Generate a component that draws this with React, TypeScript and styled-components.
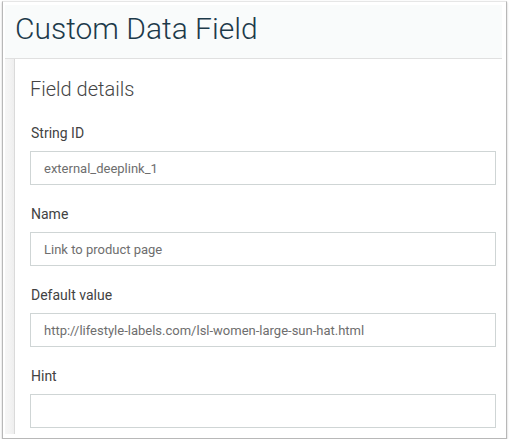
import styled, { createGlobalStyle } from 'styled-components'

const GlobalStyle = createGlobalStyle`
  html, body {
    margin: 0;
    padding: 0;
    background: #ffffff;
    font-family: Roboto, "Liberation Sans", Arial, sans-serif;
  }
`

const Frame = styled.div`
  margin: 1px 0 0 2px;
  width: 505px;
  height: 438px;
  box-sizing: border-box;
  border: 1px solid #b8b8b8;
  border-top-color: #e6e6e6;
  box-shadow: 0 1px 2px rgba(0, 0, 0, 0.22);
  padding: 3px 4px 4px 2px;
  display: flex;
  flex-direction: column;
  overflow: hidden;
`

const Header = styled.div`
  height: 54px;
  flex-shrink: 0;
  box-sizing: border-box;
  background: #f9fbfb;
  border-bottom: 1px solid #e0e0e0;
  padding: 5px 0 0 10px;
`

const Title = styled.h1`
  margin: 0;
  font-weight: 300;
  font-size: 30px;
  line-height: 38px;
  color: #1d3a4a;
`

const Body = styled.div`
  flex: 1;
  display: flex;
  min-height: 0;
  background: linear-gradient(to right, #f6f6f6 0, #f3f3f3 5px, #eeeeee 9px);
  padding-left: 9px;
`

const Card = styled.div`
  flex: 1;
  background: #ffffff;
  border-left: 1px solid #dadada;
  padding: 18px 6px 0 15px;
  display: flex;
  flex-direction: column;
  overflow: hidden;
`

const SectionTitle = styled.h2`
  margin: 0 0 22px;
  font-weight: 300;
  font-size: 20px;
  line-height: 24px;
  color: #444444;
`

const Field = styled.div`
  display: flex;
  flex-direction: column;
  margin-bottom: 19px;
`

const Label = styled.label`
  font-size: 14px;
  line-height: 20px;
  color: #424242;
  margin-left: 1px;
  margin-bottom: 8px;
`

const Input = styled.input`
  height: 34px;
  box-sizing: border-box;
  width: 466px;
  border: 1px solid #cfd5d5;
  border-radius: 0;
  padding: 0 13px;
  font-family: Roboto, "Liberation Sans", Arial, sans-serif;
  font-size: 13px;
  color: #6e6e6e;
  background: #ffffff;
  outline: none;
`

const fields = [
  { label: 'String ID', value: 'external_deeplink_1' },
  { label: 'Name', value: 'Link to product page' },
  { label: 'Default value', value: 'http://lifestyle-labels.com/lsl-women-large-sun-hat.html' },
  { label: 'Hint', value: '' }
]

export default function App() {
  return (
    <>
      <GlobalStyle />
      <Frame>
        <Header>
          <Title>Custom Data Field</Title>
        </Header>
        <Body>
          <Card>
            <SectionTitle>Field details</SectionTitle>
            {fields.map((f) => (
              <Field key={f.label}>
                <Label>{f.label}</Label>
                <Input type="text" defaultValue={f.value} readOnly />
              </Field>
            ))}
          </Card>
        </Body>
      </Frame>
    </>
  )
}
